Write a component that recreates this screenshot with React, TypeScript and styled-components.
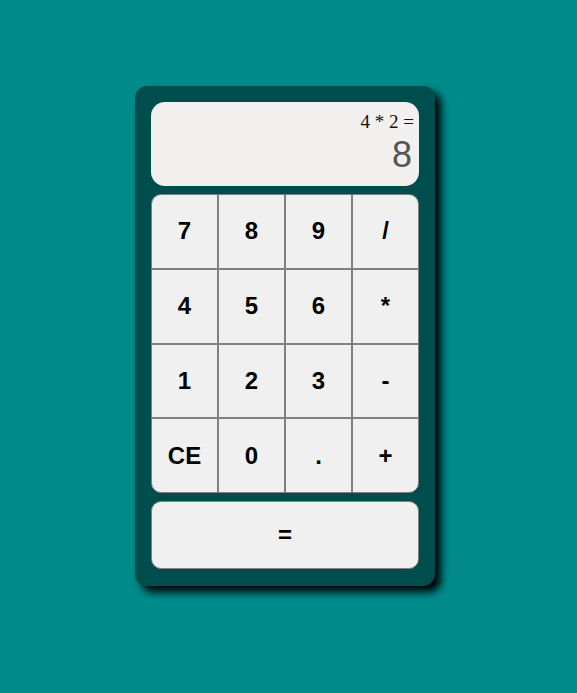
import React from "react";
import styled, { createGlobalStyle } from "styled-components";

const Global = createGlobalStyle`
  html, body { margin: 0; padding: 0; }
  body {
    background: #008b8b;
    width: 577px;
    height: 693px;
    font-family: "Liberation Sans", Arial, sans-serif;
  }
`;

const Page = styled.div`
  display: flex;
  justify-content: flex-start;
  padding: 86px 0 0 135px;
`;

const Card = styled.div`
  width: 300px;
  height: 500px;
  box-sizing: border-box;
  background: #004d4d;
  border-radius: 12px;
  box-shadow: 6px 6px 8px #000;
  padding: 16px 16px 17px;
  display: flex;
  flex-direction: column;
  gap: 8px;
`;

const Display = styled.div`
  height: 84px;
  box-sizing: border-box;
  background: #f1f0ef;
  border-radius: 14px;
  padding: 9px 5px 0 5px;
  display: flex;
  flex-direction: column;
  align-items: flex-end;
`;

const Expression = styled.div`
  font-family: "Liberation Serif", "Times New Roman", serif;
  font-size: 19px;
  line-height: 22px;
  color: #111;
`;

const Result = styled.div`
  font-family: "Liberation Sans", Arial, sans-serif;
  font-size: 36px;
  line-height: 40px;
  color: #555;
  margin: 2px 2px 0 0;
`;

const Keys = styled.div`
  height: 299px;
  display: grid;
  grid-template-columns: repeat(4, 1fr);
  grid-template-rows: repeat(4, 1fr);
`;

type KeyProps = { $corner?: "tl" | "tr" | "bl" | "br" };

const Key = styled.button<KeyProps>`
  margin: 0;
  padding: 0;
  background: #f0f0f0;
  border: 1px solid #808080;
  font-family: "Liberation Sans", Arial, sans-serif;
  font-weight: bold;
  font-size: 24px;
  color: #000;
  display: flex;
  align-items: center;
  justify-content: center;
  border-top-left-radius: ${(p) => (p.$corner === "tl" ? "10px" : "0")};
  border-top-right-radius: ${(p) => (p.$corner === "tr" ? "10px" : "0")};
  border-bottom-left-radius: ${(p) => (p.$corner === "bl" ? "10px" : "0")};
  border-bottom-right-radius: ${(p) => (p.$corner === "br" ? "10px" : "0")};
`;

const Equals = styled.button`
  height: 68px;
  margin: 0;
  padding: 0;
  background: #f0f0f0;
  border: 1px solid #808080;
  border-radius: 10px;
  font-family: "Liberation Sans", Arial, sans-serif;
  font-weight: bold;
  font-size: 24px;
  color: #000;
`;

const keys = ["7", "8", "9", "/", "4", "5", "6", "*", "1", "2", "3", "-", "CE", "0", ".", "+"];
const corners: Record<number, KeyProps["$corner"]> = { 0: "tl", 3: "tr", 12: "bl", 15: "br" };

export default function App() {
  return (
    <>
      <Global />
      <Page>
        <Card>
          <Display>
            <Expression>4 * 2 =</Expression>
            <Result>8</Result>
          </Display>
          <Keys>
            {keys.map((k, i) => (
              <Key key={k} $corner={corners[i]}>
                {k}
              </Key>
            ))}
          </Keys>
          <Equals>=</Equals>
        </Card>
      </Page>
    </>
  );
}
